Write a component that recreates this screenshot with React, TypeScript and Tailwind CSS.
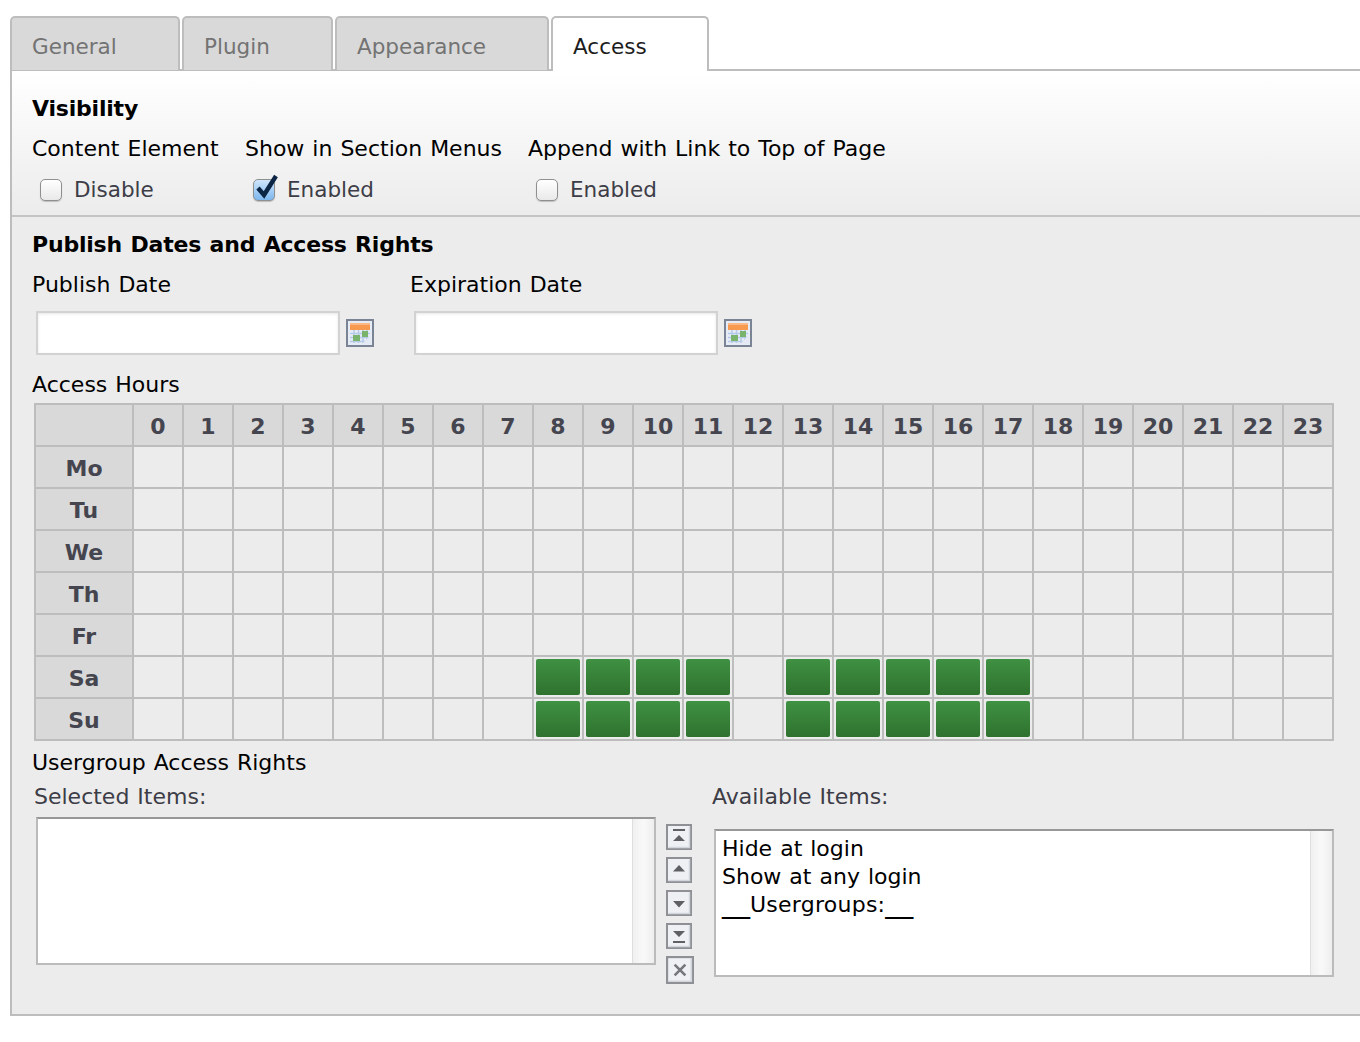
import type { ReactNode } from 'react';

const hours = Array.from({ length: 24 }, (_, i) => i);
const days = ['Mo', 'Tu', 'We', 'Th', 'Fr', 'Sa', 'Su'];
const activeHours = [8, 9, 10, 11, 13, 14, 15, 16, 17];

const Tab = ({ label, width, active = false }: { label: string; width: string; active?: boolean }) => (
  <div
    className={`${width} ${
      active ? 'bg-white text-[#1c1c1c] h-[55px] border-b-0 z-10' : 'bg-[#d9d9d9] text-[#737373] h-[54px] border-b-0'
    } relative flex items-center pl-[20px] pt-[6px] text-[21.5px] border-2 border-[#bdbdbd] rounded-t-[5px]`}
  >
    {label}
  </div>
);

const Checkbox = ({ checked = false }: { checked?: boolean }) => (
  <div
    className={`relative w-[22px] h-[22px] rounded-[5px] border border-[#8f8f8f] shadow-[0_1px_1px_rgba(0,0,0,0.2)] ${
      checked ? 'bg-gradient-to-b from-[#cfe5fb] to-[#7db7ee]' : 'bg-gradient-to-b from-white to-[#e9e9e9]'
    }`}
  >
    {checked && (
      <svg className="absolute left-[0px] -top-[6px]" width="24" height="28" viewBox="0 0 24 28">
        <path d="M4 14 L10 21 L22 2" fill="none" stroke="#0d2544" strokeWidth="4.4" />
      </svg>
    )}
  </div>
);

const CalendarIcon = () => (
  <svg width="28" height="28" viewBox="0 0 28 28">
    <rect x="1" y="1" width="26" height="26" fill="#e6ecf6" stroke="#7b8494" strokeWidth="2" />
    <path d="M4 14.5h20M4 18.5h20M4 22.5h20M8 11v13M12.5 11v13M17 11v13M21 11v13" stroke="#b7c9e8" strokeWidth="1.5" />
    <path d="M16 25L25 16v9z" fill="#e4e9f3" />
    <rect x="4" y="4" width="20" height="7" fill="#f79a4f" />
    <rect x="4" y="4" width="20" height="2" fill="#fbb887" />
    <rect x="7" y="16" width="7" height="6" fill="#7ab36c" />
    <rect x="16" y="12" width="6" height="6" fill="#7ab36c" />
  </svg>
);

const MoveButton = ({ kind }: { kind: 'top' | 'up' | 'down' | 'bottom' | 'remove' }) => (
  <svg width={kind === 'remove' ? 28 : 26} height={kind === 'remove' ? 28 : 26} viewBox="0 0 26 26" className="block">
    <rect x="1" y="1" width="24" height="24" fill="#eef0f4" stroke="#8e9095" strokeWidth="2" />
    <path d="M23.5 2.5v21h-21" fill="none" stroke="#d3d5dc" strokeWidth="1.5" />
    {kind === 'top' && <path d="M7 5h12v2H7zM13 11l6 6H7z" fill="#5f6064" />}
    {kind === 'up' && <path d="M13 8l6 6.5H7z" fill="#5f6064" />}
    {kind === 'down' && <path d="M7 11h12l-6 6.5z" fill="#5f6064" />}
    {kind === 'bottom' && <path d="M7 8h12l-6 6zM7 18h12v2H7z" fill="#5f6064" />}
    {kind === 'remove' && <path d="M8 8l10 10M18 8L8 18" stroke="#75777c" strokeWidth="2.4" fill="none" />}
  </svg>
);

const ListBox = ({ children }: { children?: ReactNode }) => (
  <div className="h-[148px] w-[620px] flex bg-white border-2 border-[#bbbbbb] border-t-[#989898]">
    <div className="flex-1 pl-[6px] pt-[4px] text-black leading-[28px]">{children}</div>
    <div className="w-[22px] border-l border-[#dedede] bg-gradient-to-r from-[#f0f0f0] via-[#f9f9f9] to-[#eeeeee]" />
  </div>
);

export default function App() {
  return (
    <div className="h-[1042px] overflow-hidden bg-white pt-[16px] pl-[10px] font-['DejaVu_Sans',sans-serif] text-[22px] [word-spacing:1px] text-black">
      {/* Tabs */}
      <div className="flex gap-[2px] relative -mb-[2px]">
        <Tab label="General" width="w-[170px]" />
        <Tab label="Plugin" width="w-[151px]" />
        <Tab label="Appearance" width="w-[214px]" />
        <Tab label="Access" width="w-[158px]" active />
      </div>

      <div className="h-[947px] border-2 border-r-0 border-[#bdbdbd] bg-[#ececec]">
        {/* Visibility */}
        <div className="h-[146px] pl-[20px] pt-[23px] border-b-2 border-[#c4c4c4] bg-gradient-to-b from-white to-[#ececec]">
          <div className="font-bold tracking-[-0.2px] h-[28px] leading-[30px]">Visibility</div>
          <div className="flex mt-[12px]">
            <div className="w-[213px]">
              <div className="h-[28px] leading-[30px]">Content Element</div>
              <div className="flex items-center h-[28px] mt-[14px] pl-[8px] gap-[12px] text-[21.5px] text-[#3d3d47]">
                <Checkbox />
                Disable
              </div>
            </div>
            <div className="w-[283px]">
              <div className="h-[28px] leading-[30px]">Show in Section Menus</div>
              <div className="flex items-center h-[28px] mt-[14px] pl-[8px] gap-[12px] text-[21.5px] text-[#3d3d47]">
                <Checkbox checked />
                Enabled
              </div>
            </div>
            <div>
              <div className="h-[28px] leading-[30px]">Append with Link to Top of Page</div>
              <div className="flex items-center h-[28px] mt-[14px] pl-[8px] gap-[12px] text-[21.5px] text-[#3d3d47]">
                <Checkbox />
                Enabled
              </div>
            </div>
          </div>
        </div>

        {/* Publish dates */}
        <div className="pl-[20px] pt-[13px]">
          <div className="font-bold tracking-[-0.2px] h-[28px] leading-[30px]">Publish Dates and Access Rights</div>
          <div className="flex mt-[12px]">
            {['Publish Date', 'Expiration Date'].map((label) => (
              <div key={label} className="w-[378px]">
                <div className="h-[28px] leading-[30px]">{label}</div>
                <div className="flex items-center gap-[6px] pl-[4px] mt-[13px]">
                  <div className="w-[304px] h-[44px] bg-white border-2 border-[#d2d2d2] shadow-[inset_0_1px_3px_rgba(0,0,0,0.1)]" />
                  <CalendarIcon />
                </div>
              </div>
            ))}
          </div>

          <div className="h-[28px] leading-[30px] mt-[15px]">Access Hours</div>

          {/* Access hours grid */}
          <div className="grid grid-cols-[96px_repeat(24,48px)] auto-rows-[40px] gap-[2px] p-[2px] w-[1300px] ml-[2px] mt-[5px] bg-[#bdbdbd] font-bold text-[#45454f]">
            <div className="bg-[#d9d9d9]" />
            {hours.map((h) => (
              <div key={h} className="bg-[#d9d9d9] flex items-center justify-center pt-[2px]">
                {h}
              </div>
            ))}
            {days.map((day) => (
              <div key={day} className="contents">
                <div className="bg-[#d9d9d9] flex items-center justify-center pt-[2px]">{day}</div>
                {hours.map((h) => (
                  <div key={h} className="bg-[#ececec] p-[2px]">
                    {(day === 'Sa' || day === 'Su') && activeHours.includes(h) && (
                      <div className="h-full rounded-[2px] bg-gradient-to-b from-[#3f9143] to-[#2f722f]" />
                    )}
                  </div>
                ))}
              </div>
            ))}
          </div>

          {/* Usergroup rights */}
          <div className="h-[28px] leading-[30px] mt-[7px]">Usergroup Access Rights</div>
          <div className="flex mt-[6px]">
            <div className="pl-[2px]">
              <div className="h-[28px] leading-[30px] text-[#3d3d47]">Selected Items:</div>
              <div className="mt-[7px] ml-[2px]">
                <ListBox />
              </div>
            </div>
            <div className="w-[58px] pl-[10px] pt-[42px] flex flex-col gap-[7px] shrink-0">
              <MoveButton kind="top" />
              <MoveButton kind="up" />
              <MoveButton kind="down" />
              <MoveButton kind="bottom" />
              <MoveButton kind="remove" />
            </div>
            <div className="-ml-[2px]">
              <div className="h-[28px] leading-[30px] text-[#3d3d47]">Available Items:</div>
              <div className="mt-[19px] ml-[2px]">
                <ListBox>
                  <div>Hide at login</div>
                  <div>Show at any login</div>
                  <div className="h-[28px]">
                    <span className="text-[28px] leading-[0]">__</span>
                    <span className="tracking-[0.25px]">Usergroups:</span>
                    <span className="text-[28px] leading-[0]">__</span>
                  </div>
                </ListBox>
              </div>
            </div>
          </div>
        </div>
      </div>
    </div>
  );
}
